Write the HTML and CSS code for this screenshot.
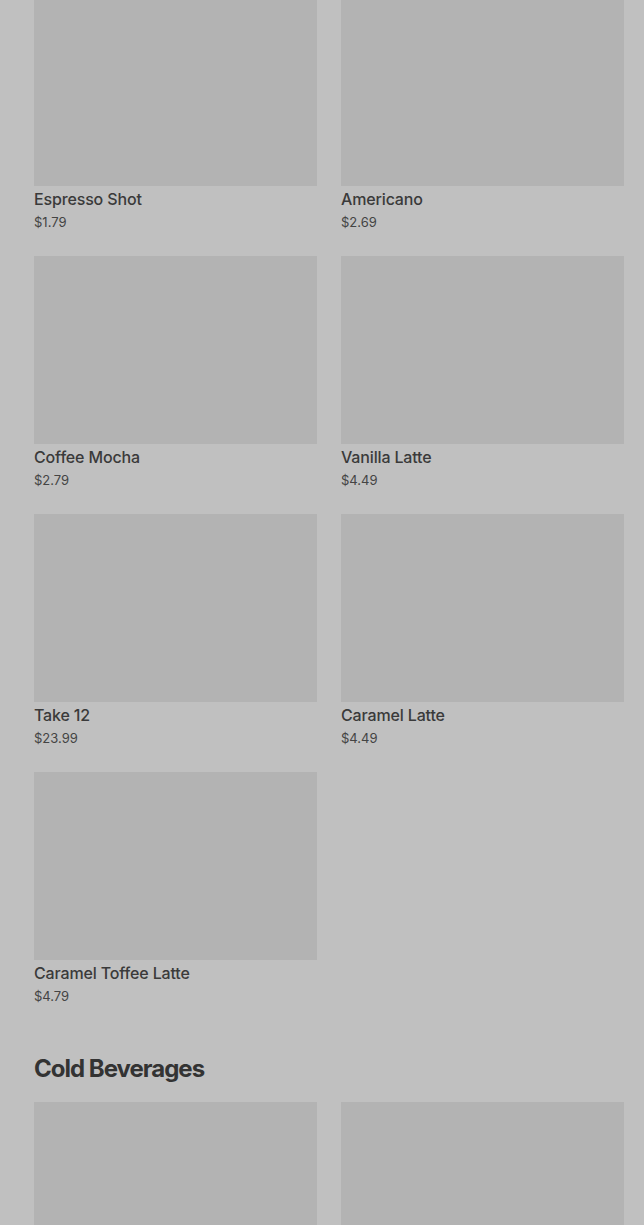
FILE: index.html
```html
<!DOCTYPE html>
<html lang="en">
<head>
    <meta charset="UTF-8">
    <meta name="viewport" content="width=device-width, initial-scale=1.0">
    <title>Menu</title>
    <link rel="stylesheet" href="styles.css">
</head>
<body>
    <div class="menu">
        <!-- Hot drinks -->
        <div class="grid first">
            <div class="item">
                <div class="thumb"></div>
                <div class="name">Espresso Shot</div>
                <div class="price">$1.79</div>
            </div>
            <div class="item">
                <div class="thumb"></div>
                <div class="name">Americano</div>
                <div class="price">$2.69</div>
            </div>
            <div class="item">
                <div class="thumb"></div>
                <div class="name">Coffee Mocha</div>
                <div class="price">$2.79</div>
            </div>
            <div class="item">
                <div class="thumb"></div>
                <div class="name">Vanilla Latte</div>
                <div class="price">$4.49</div>
            </div>
            <div class="item">
                <div class="thumb"></div>
                <div class="name">Take 12</div>
                <div class="price">$23.99</div>
            </div>
            <div class="item">
                <div class="thumb"></div>
                <div class="name">Caramel Latte</div>
                <div class="price">$4.49</div>
            </div>
            <div class="item">
                <div class="thumb"></div>
                <div class="name">Caramel Toffee Latte</div>
                <div class="price">$4.79</div>
            </div>
        </div>

        <h2 class="section-title">Cold Beverages</h2>

        <div class="grid">
            <div class="item">
                <div class="thumb"></div>
            </div>
            <div class="item">
                <div class="thumb"></div>
            </div>
        </div>
    </div>
</body>
</html>
```

FILE: styles.css
```css
body {
    margin: 0;
    background-color: #c0c0c0;
    font-family: Inter, "Noto Sans", sans-serif;
    color: #3c3c3c;
    overflow: hidden;
}
.menu {
    padding: 0 20px 0 34px;
}
.grid {
    display: grid;
    grid-template-columns: 283px 283px;
    column-gap: 24px;
    row-gap: 24px;
}
.grid.first {
    margin-top: -2px;
}
.thumb {
    height: 188px;
    background-color: #b3b3b3;
}
.name {
    margin-top: 3px;
    font-size: 16px;
    font-weight: 500;
    line-height: 20px;
    letter-spacing: -0.15px;
    color: #3a3a3a;
}
.price {
    margin-top: 3px;
    font-size: 13px;
    line-height: 20px;
    color: #444;
}
.section-title {
    margin: 47px 0 17px;
    font-size: 24px;
    font-weight: 700;
    line-height: 32px;
    letter-spacing: -1px;
    color: #333;
}
```
